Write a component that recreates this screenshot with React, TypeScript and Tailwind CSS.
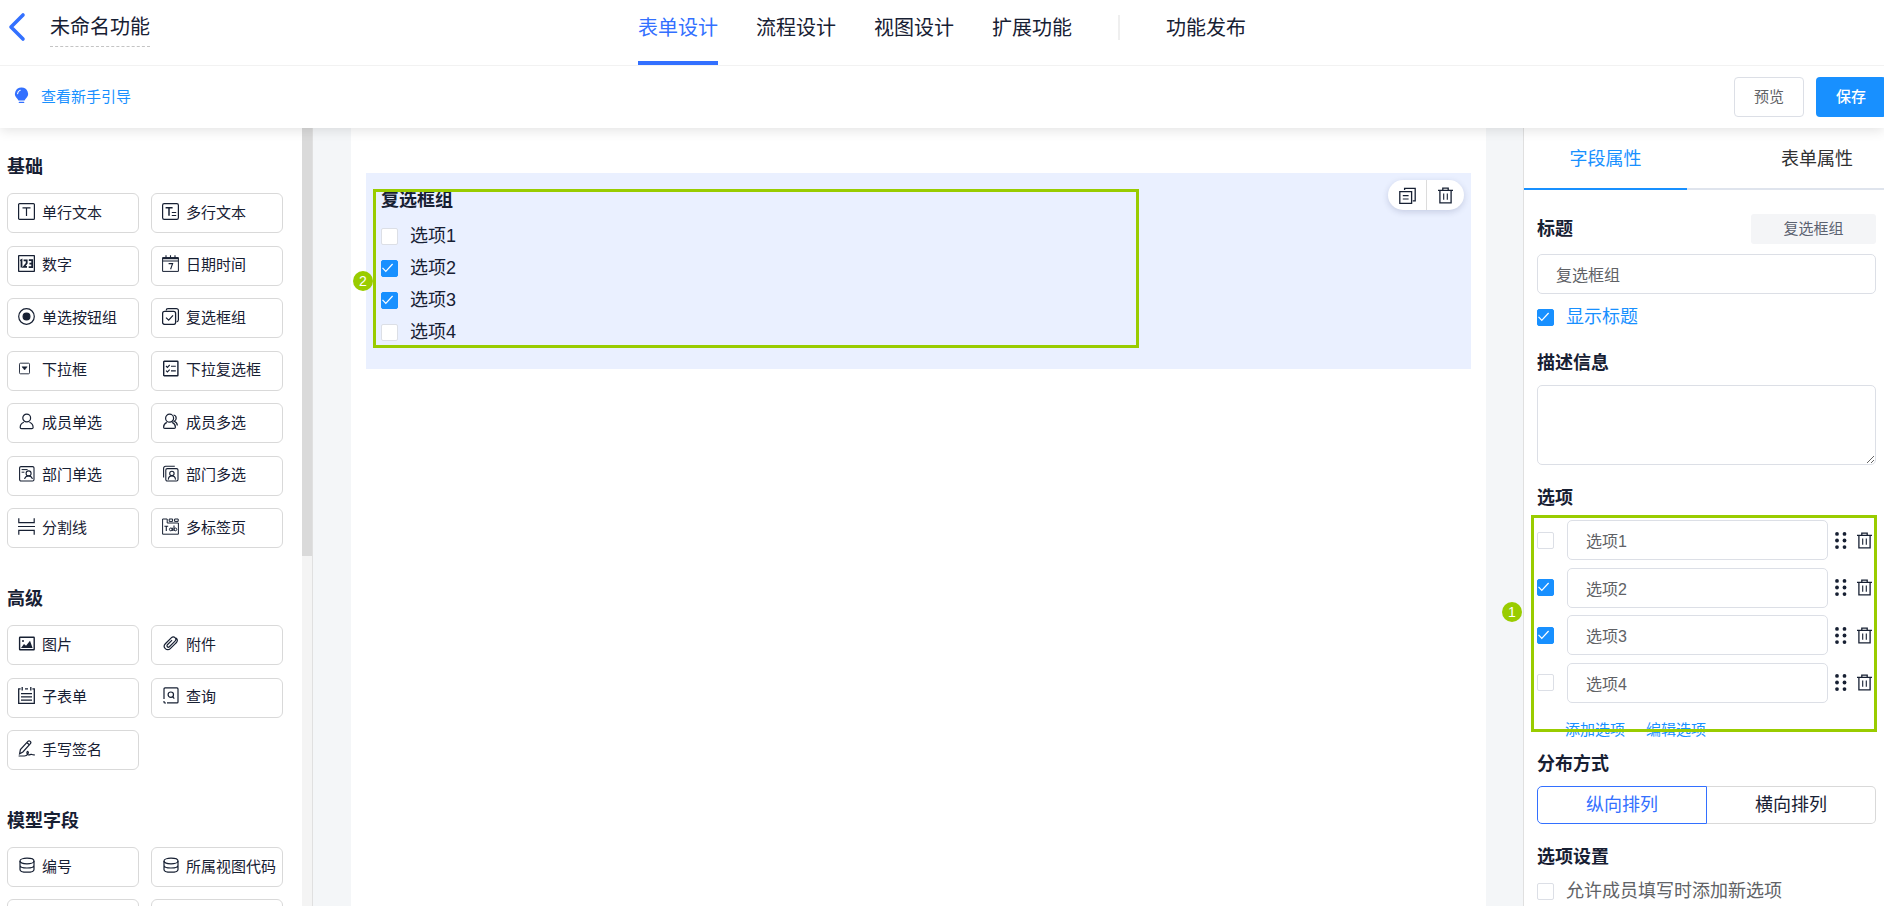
import { useState, type ReactNode } from 'react';

type FieldItem = { label: string; icon: ReactNode };
type Option = { label: string; checked: boolean };

function Glyph({ children }: { children: ReactNode }) {
  return (
    <svg
      viewBox="0 0 17 17"
      className="h-[17px] w-[17px] shrink-0"
      fill="none"
      stroke="currentColor"
      strokeWidth="1.2"
      aria-hidden="true"
    >
      {children}
    </svg>
  );
}

const icons = {
  text: (
    <Glyph>
      <rect x="0.6" y="0.6" width="15.8" height="15.8" rx="1" />
      <path d="M4.5 4.9h8M8.5 4.9v8" />
    </Glyph>
  ),
  multiText: (
    <Glyph>
      <rect x="0.6" y="0.6" width="15.8" height="15.8" rx="1.6" />
      <path d="M3.6 4.7h7M7 4.7v8" strokeWidth="1.5" />
      <path d="M9.8 9.5h4.4M9.8 12.5h4.4" />
    </Glyph>
  ),
  number: (
    <Glyph>
      <rect x="0.6" y="0.6" width="15.8" height="15.8" rx="0.6" strokeWidth="1.3" />
      <path d="M2.2 5.7l1.3-.7v7.4M5.6 5.4h3.1v2.9l-2.9 3.6h3.2M10.8 5.2h3.4v6.9h-3.5M11.4 8.6h2.8" strokeWidth="1.8" />
    </Glyph>
  ),
  date: (
    <Glyph>
      <path d="M0.6 2.6h15.8v13.8H0.6z" strokeWidth="1" />
      <path d="M0.5 3.4h16" strokeWidth="1.6" />
      <path d="M0.6 6h15.8" strokeWidth="1" />
      <path d="M4 .3v2.4M8.5 .3v2.4M13 .3v2.4M6.6 8.6h4l-2 5.6" strokeWidth="1.1" />
    </Glyph>
  ),
  radio: (
    <Glyph>
      <circle cx="8.5" cy="8.5" r="7.8" />
      <circle cx="8.5" cy="8.5" r="3.4" fill="currentColor" />
    </Glyph>
  ),
  checkbox: (
    <Glyph>
      <rect x="0.6" y="3.4" width="13" height="13" rx="2" strokeWidth="1.3" />
      <path d="M4.2 2.6V2.4A1.8 1.8 0 0 1 6 .6h8.4a2 2 0 0 1 2 2v9.2a2 2 0 0 1-1.8 2" />
      <path d="M4 9.6l2.7 2.6 4.3-4.8" />
    </Glyph>
  ),
  select: (
    <Glyph>
      <rect x="1.5" y="3.2" width="10" height="10.6" rx="1" strokeWidth="0.9" />
      <path d="M4 6.8h5.2L6.6 10z" fill="currentColor" strokeWidth="0.5" />
    </Glyph>
  ),
  multiSelect: (
    <Glyph>
      <rect x="1.7" y="1.2" width="14.2" height="14.6" rx="0.6" strokeWidth="1.4" />
      <path d="M4 6l1.4 1.4L7.7 5M4 10.6L5.4 12l2.3-2.4M9 6.3h4.8M9 10.9h4.8" strokeWidth="1.1" />
    </Glyph>
  ),
  user: (
    <Glyph>
      <circle cx="8.7" cy="5" r="3.9" />
      <path d="M5.8 9.2c-2.3.9-3.6 2.8-3.6 5.2 0 .8.5 1.2 1.3 1.2h10.3c.8 0 1.3-.4 1.3-1.2 0-2.4-1.3-4.3-3.6-5.2" />
    </Glyph>
  ),
  users: (
    <Glyph>
      <circle cx="7.6" cy="5.2" r="4" />
      <path d="M4.8 9.4c-2 .9-3.2 2.6-3.2 4.8 0 .8.4 1.2 1.2 1.2h9.4c.8 0 1.2-.4 1.2-1.2 0-2.2-1.2-3.9-3.2-4.8" />
      <path d="M11.6 2c1.6.3 2.6 1.5 2.6 3.2 0 1.5-.8 2.6-2 3.1 1.9.7 3 2.2 3.2 4.2" />
    </Glyph>
  ),
  dept: (
    <Glyph>
      <path d="M8 16H3a1.4 1.4 0 0 1-1.4-1.4V3A1.4 1.4 0 0 1 3 1.6h11.6A1.4 1.4 0 0 1 16 3v11.6A1.4 1.4 0 0 1 14.6 16H8z" strokeWidth="1.1" />
      <path d="M3.6 4.6h6M3.6 7.2h2.8" strokeWidth="1" />
      <circle cx="10.6" cy="8.4" r="2.5" strokeWidth="1.1" />
      <path d="M6.6 14c.4-1.9 1.6-3 3.9-3s3.5 1.1 3.9 3" strokeWidth="1.1" />
    </Glyph>
  ),
  depts: (
    <Glyph>
      <rect x="3.8" y="3.6" width="12.2" height="12.4" rx="1.5" strokeWidth="1.1" />
      <path d="M1.6 12.6V3.2a2 2 0 0 1 2-2h9.2" strokeWidth="1.1" />
      <circle cx="9.9" cy="8.4" r="2.2" strokeWidth="1.1" />
      <path d="M6.3 14.6c.2-2.3 1.5-3.7 3.6-3.7s3.4 1.4 3.6 3.7" strokeWidth="1.1" />
    </Glyph>
  ),
  divider: (
    <Glyph>
      <path d="M.8.3v4.3h15.4V.3M0 8.5h17M.8 16.7v-4.3h15.4v4.3" />
    </Glyph>
  ),
  tabs: (
    <Glyph>
      <path d="M.6 1v15.2h15.8V5H5.2V1zM7.2 3.4V1h3.4v2.4zM12.6 3.4V1h3.6v2.4z" strokeWidth="1" />
      <path d="M2.4 8.2h3.8M4.3 8.2v4.8M10.3 13V9.8M12 7.5v5.5" strokeWidth="1.1" />
      <circle cx="8.8" cy="11.4" r="1.4" strokeWidth="1" />
      <circle cx="13.4" cy="11.4" r="1.4" strokeWidth="1" />
    </Glyph>
  ),
  image: (
    <Glyph>
      <rect x="1.6" y="2.2" width="14.6" height="12.6" rx="0.5" strokeWidth="1.4" />
      <circle cx="5" cy="6" r="1" fill="currentColor" stroke="none" />
      <path d="M3 13l3-4 2 1.8 4-5L14.6 13z" fill="currentColor" stroke="none" />
    </Glyph>
  ),
  clip: (
    <Glyph>
      <g transform="rotate(45 8.5 8.5)">
        <path d="M12 5.5v6.8a3.5 3.5 0 0 1-7 0V3.6a2.5 2.5 0 0 1 5 0v8a1.4 1.4 0 0 1-2.8 0V5M12 5.5V3.6A3.5 3.5 0 0 0 8.5 .5" />
      </g>
    </Glyph>
  ),
  subform: (
    <Glyph>
      <path d="M2.6 1.8H.7v14.5h15.6V1.8h-1.9M7 1.8h3M4.2 0v3.4M12.8 0v3.4" strokeWidth="1.3" />
      <path d="M3 6.6h11M3 9.9h11M3 13.1h11" />
    </Glyph>
  ),
  query: (
    <Glyph>
      <path d="M2 12V1.9A1 1 0 0 1 3 .9h12a1 1 0 0 1 1 1v13a1 1 0 0 1-1 1H5" />
      <path d="M2 14v1a1 1 0 0 0 1 1h1" />
      <circle cx="8.8" cy="7.7" r="2.7" />
      <path d="M10.6 9.7l1.7 1.9" />
    </Glyph>
  ),
  sign: (
    <Glyph>
      <path d="M1.6 13.8l.8-4.2L9.9 1.4a1.7 1.7 0 0 1 2.5 2.3L4.9 12z" />
      <path d="M9 2.7l2.4 2.1M.6 16h5.8c3 0 4.8-3.2 3.6-4.4-1.2-.9-2 2.8.6 3.4 1 .2 1.8-.9 2.7-.7.9.3 1.7.9 3.5.5" />
    </Glyph>
  ),
  data: (
    <Glyph>
      <ellipse cx="9" cy="4" rx="7" ry="2.8" />
      <path d="M2 4v8.4C2 14 5.2 15.2 9 15.2s7-1.2 7-2.8V4M2 8.2C2 9.8 5.2 11 9 11s7-1.2 7-2.8" />
    </Glyph>
  ),
};

const groups: { title: string; height: string; items: FieldItem[] }[] = [
  {
    title: '基础',
    height: 'min-h-[355px]',
    items: [
      { label: '单行文本', icon: icons.text },
      { label: '多行文本', icon: icons.multiText },
      { label: '数字', icon: icons.number },
      { label: '日期时间', icon: icons.date },
      { label: '单选按钮组', icon: icons.radio },
      { label: '复选框组', icon: icons.checkbox },
      { label: '下拉框', icon: icons.select },
      { label: '下拉复选框', icon: icons.multiSelect },
      { label: '成员单选', icon: icons.user },
      { label: '成员多选', icon: icons.users },
      { label: '部门单选', icon: icons.dept },
      { label: '部门多选', icon: icons.depts },
      { label: '分割线', icon: icons.divider },
      { label: '多标签页', icon: icons.tabs },
    ],
  },
  {
    title: '高级',
    height: 'min-h-[145px]',
    items: [
      { label: '图片', icon: icons.image },
      { label: '附件', icon: icons.clip },
      { label: '子表单', icon: icons.subform },
      { label: '查询', icon: icons.query },
      { label: '手写签名', icon: icons.sign },
    ],
  },
  {
    title: '模型字段',
    height: 'min-h-[92px]',
    items: [
      { label: '编号', icon: icons.data },
      { label: '所属视图代码', icon: icons.data },
      { label: '', icon: null },
      { label: '', icon: null },
    ],
  },
];

function CheckBox({ checked, onChange, label }: { checked: boolean; onChange: () => void; label?: string }) {
  return (
    <span className="grid h-[17px] w-[17px] shrink-0">
      <input
        type="checkbox"
        aria-label={label}
        checked={checked}
        onChange={onChange}
        className="col-start-1 row-start-1 h-[17px] w-[17px] appearance-none rounded-[2px] border border-[#dcdfe6] bg-white checked:border-[#1890ff] checked:bg-[#1890ff]"
      />
      {checked && (
        <svg
          viewBox="0 0 17 17"
          className="pointer-events-none col-start-1 row-start-1 h-[17px] w-[17px]"
          fill="none"
          stroke="#fff"
          strokeWidth="1.2"
          aria-hidden="true"
        >
          <path d="M1.5 7.8l3.3 3.6L11.6 4" />
        </svg>
      )}
    </span>
  );
}

function TrashIcon() {
  return (
    <Glyph>
      <path d="M1 3.3h15M5.8 3.3V1.1h5.4v2.2M2.9 3.3v12.6h11.2V3.3" strokeWidth="1.3" />
      <path d="M6.7 6.4v6.4M10.3 6.4v6.4" strokeWidth="1.1" />
    </Glyph>
  );
}

function Heading({ children }: { children: ReactNode }) {
  return <h3 className="mb-[10px] pt-px text-lg/6 font-bold">{children}</h3>;
}

function Badge({ children }: { children: ReactNode }) {
  return (
    <span className="flex h-5 w-5 items-center justify-center rounded-full bg-[#99cc00] text-sm/5 text-white">
      {children}
    </span>
  );
}

function Header() {
  const tabs = ['流程设计', '视图设计', '扩展功能'];
  return (
    <header className="z-20 flex h-[66px] shrink-0 items-start border-b border-[#f2f2f2] bg-white">
      <div className="flex flex-1 items-start">
        <button type="button" aria-label="返回" className="mt-3 ml-2 text-[#3370ff]">
          <svg viewBox="0 0 18 30" className="h-[30px] w-[18px]" fill="none" stroke="currentColor" strokeWidth="3.6" strokeLinecap="round" strokeLinejoin="round">
            <path d="M15 3L3 15l12 12" />
          </svg>
        </button>
        <h1 className="ml-6 border-b border-dashed border-[#c4c4c4] pt-[11px] pb-[3px] text-xl/8">未命名功能</h1>
      </div>
      <nav className="flex h-[65px] items-start text-xl/8">
        <a href="#form" className="flex h-full items-start border-b-4 border-[#3370ff] pt-3 text-[#3370ff]">
          表单设计
        </a>
        {tabs.map((tab) => (
          <a key={tab} href="#tab" className="ml-[38px] pt-3">
            {tab}
          </a>
        ))}
        <span className="mx-[46px] mt-[15px] h-[25px] w-[2px] bg-[#efefef]" />
        <a href="#publish" className="pt-3">
          功能发布
        </a>
      </nav>
      <div className="flex-1" />
    </header>
  );
}

function Toolbar() {
  return (
    <div className="z-10 flex h-[62px] shrink-0 items-center bg-white pl-[13px] shadow-[0_2px_12px_rgba(0,0,0,0.12)]">
      <svg viewBox="0 0 17 19" className="mb-[3px] h-[19px] w-[17px] text-[#3370ff]" aria-hidden="true">
        <path d="M8.5 1.4a6.4 6.4 0 0 0-4.2 11.3c.6.6 1 1.2 1.1 1.9h6.2c.1-.7.5-1.3 1.1-1.9A6.4 6.4 0 0 0 8.5 1.4z" fill="currentColor" />
        <path d="M6.4 16.4h4.2" stroke="currentColor" strokeWidth="1.4" strokeLinecap="round" />
        <path d="M4.6 7.6a4 4 0 0 1 2.6-3.4" stroke="#fff" strokeWidth="1.1" fill="none" strokeLinecap="round" />
      </svg>
      <a href="#guide" className="ml-[11px] text-[15px]/6 text-[#1890ff]">
        查看新手引导
      </a>
      <div className="-mr-[2px] ml-auto flex gap-3 text-[15px]/6">
        <button type="button" className="h-10 w-[70px] rounded-[4px] border border-[#dcdfe6] text-[#606266]">
          预览
        </button>
        <button type="button" className="h-10 w-[70px] rounded-[4px] bg-[#1890ff] font-medium text-white">
          保存
        </button>
      </div>
    </div>
  );
}

function Sidebar() {
  return (
    <aside className="flex w-[313px] shrink-0 border-r border-[#e0e0e0] bg-white">
      <div className="flex flex-1 flex-col gap-[39px] overflow-hidden pt-[27px] pl-[7px]">
        {groups.map((group) => (
          <section key={group.title}>
            <h2 className="mb-[14px] text-lg/6 font-bold">{group.title}</h2>
            <div className={`grid grid-cols-[132px_132px] content-between gap-x-3 ${group.height}`}>
              {group.items.map((item, i) => (
                <button
                  key={i}
                  type="button"
                  className="flex h-10 items-center gap-[7px] rounded-md border border-[#d9d9d9] pb-1 pl-[10px] text-[15px]/6 whitespace-nowrap"
                >
                  {item.icon}
                  <span className="pt-[3px]">{item.label}</span>
                </button>
              ))}
            </div>
          </section>
        ))}
      </div>
      <div className="w-[10px] bg-[#f4f4f4]">
        <div className="h-[55%] bg-[#dadada]" />
      </div>
    </aside>
  );
}

function Canvas({ options, toggle }: { options: Option[]; toggle: (i: number) => void }) {
  return (
    <main className="flex flex-1 bg-[#f4f6f8] pr-[37px] pl-[38px]">
      <div className="flex-1 bg-white px-[15px] pt-[45px]">
        <div className="relative bg-[#eaf0ff] px-[15px] pt-[15px] pb-[21px]">
          <h3 className="mb-2 text-lg/6 font-bold">复选框组</h3>
          {options.map((o, i) => (
            <label key={i} className="flex h-8 w-max items-center gap-3 text-lg/6">
              <CheckBox checked={o.checked} onChange={() => toggle(i)} />
              {o.label}
            </label>
          ))}
          <div className="absolute top-[7px] right-[7px] flex h-[30px] rounded-full bg-white shadow-[0_2px_6px_rgba(40,50,100,0.18)]">
            <button type="button" aria-label="复制" className="flex w-[39px] items-center justify-center border-r border-[#dcdcdc]">
              <Glyph>
                <path d="M.8 4.7h11.8v11.6H.8zM5.6 3V1.3h10.6v12.5h-2.4" strokeWidth="1.3" />
                <path d="M3.8 8.6h5.8M3.8 12h5.8" />
              </Glyph>
            </button>
            <button type="button" aria-label="删除" className="flex w-[37px] items-center justify-center">
              <TrashIcon />
            </button>
          </div>
          <div className="pointer-events-none absolute top-4 left-[7px] h-[159px] w-[766px] border-[3px] border-[#99cc00]" />
          <div className="absolute top-[98px] left-[-13px]">
            <Badge>2</Badge>
          </div>
        </div>
      </div>
    </main>
  );
}

function PropertyPanel({
  options,
  toggle,
  rename,
}: {
  options: Option[];
  toggle: (i: number) => void;
  rename: (i: number, v: string) => void;
}) {
  const [showTitle, setShowTitle] = useState(true);
  const [allowNew, setAllowNew] = useState(false);
  const [title, setTitle] = useState('复选框组');
  const input = 'h-10 rounded-[5px] border border-[#dcdfe6] bg-white px-[18px] text-base/6 text-[#606266] outline-none';
  return (
    <aside className="relative w-[361px] shrink-0 border-l border-[#e0e0e0] bg-white">
      <div className="flex h-[62px] overflow-hidden text-lg/6 text-[#303133]">
        <button type="button" className="w-[163px] shrink-0 border-b-2 border-[#1890ff] pt-[2px] text-[#1890ff]">
          字段属性
        </button>
        <button type="button" className="flex-1 border-b-2 border-[#dfe4ed] pt-[2px] pr-[31px] text-right">
          表单属性
        </button>
      </div>
      <div className="flex flex-col pt-6 pr-2 pl-[13px]">
        <div className="mb-[10px] flex h-[30px] items-center justify-between">
          <label htmlFor="title" className="text-lg/6 font-bold">
            标题
          </label>
          <span className="w-[125px] rounded-[3px] bg-[#f4f5f7] text-center text-[15px]/[30px] text-[#5b6270]">复选框组</span>
        </div>
        <input id="title" className={input} value={title} onChange={(e) => setTitle(e.target.value)} />
        <label className="mt-[11px] mb-[21px] flex w-max items-center gap-3 text-lg/6 text-[#1890ff]">
          <CheckBox checked={showTitle} onChange={() => setShowTitle(!showTitle)} />
          显示标题
        </label>
        <Heading>描述信息</Heading>
        <textarea
          aria-label="描述信息"
          className="mb-5 h-20 w-full resize-y rounded-[5px] border border-[#dcdfe6] px-[18px] py-2 text-base/6 outline-none"
        />
        <Heading>选项</Heading>
        <div className="relative mb-[15px] flex min-h-[183px] flex-col justify-between">
          {options.map((o, i) => (
            <div key={i} className="flex items-center">
              <CheckBox checked={o.checked} onChange={() => toggle(i)} label={`默认选中${i + 1}`} />
              <input
                aria-label={`选项名称${i + 1}`}
                className={`ml-[13px] min-w-0 flex-1 ${input}`}
                value={o.label}
                onChange={(e) => rename(i, e.target.value)}
              />
              <button type="button" aria-label="拖动排序" className="ml-[5px]">
                <svg viewBox="0 0 17 17" className="h-[17px] w-[17px]" fill="currentColor" aria-hidden="true">
                  {[1.9, 8.5, 15.1].map((y) => (
                    <g key={y}>
                      <circle cx="4" cy={y} r="1.9" />
                      <circle cx="11.5" cy={y} r="1.9" />
                    </g>
                  ))}
                </svg>
              </button>
              <button type="button" aria-label="删除选项" className="mr-[3px] ml-[6px]">
                <TrashIcon />
              </button>
            </div>
          ))}
          <div className="pointer-events-none absolute -top-[5px] -right-px h-[217px] w-[346px] border-[3px] border-[#99cc00]" />
          <div className="absolute top-[82px] left-[-35px]">
            <Badge>1</Badge>
          </div>
        </div>
        <div className="mb-[9px] flex gap-[21px] pl-7 text-[15px]/6 text-[#1890ff]">
          <button type="button">添加选项</button>
          <button type="button">编辑选项</button>
        </div>
        <Heading>分布方式</Heading>
        <div className="mb-5 flex h-[38px] text-lg/6">
          <button type="button" className="flex-1 rounded-l-[5px] border border-[#3370ff] text-[#3370ff]">
            纵向排列
          </button>
          <button type="button" className="flex-1 rounded-r-[5px] border border-l-0 border-[#d9d9d9]">
            横向排列
          </button>
        </div>
        <Heading>选项设置</Heading>
        <label className="flex w-max items-center gap-3 text-lg/6 text-[#606266]">
          <CheckBox checked={allowNew} onChange={() => setAllowNew(!allowNew)} />
          允许成员填写时添加新选项
        </label>
      </div>
    </aside>
  );
}

export default function App() {
  const [options, setOptions] = useState<Option[]>([
    { label: '选项1', checked: false },
    { label: '选项2', checked: true },
    { label: '选项3', checked: true },
    { label: '选项4', checked: false },
  ]);
  const toggle = (i: number) => setOptions(options.map((o, n) => (n === i ? { ...o, checked: !o.checked } : o)));
  const rename = (i: number, label: string) => setOptions(options.map((o, n) => (n === i ? { ...o, label } : o)));

  return (
    <div className="flex h-screen flex-col overflow-hidden bg-white font-['Liberation_Sans','Noto_Sans_CJK_SC',sans-serif] text-[#172033]">
      <Header />
      <Toolbar />
      <div className="flex min-h-0 flex-1 overflow-hidden">
        <Sidebar />
        <Canvas options={options} toggle={toggle} />
        <PropertyPanel options={options} toggle={toggle} rename={rename} />
      </div>
    </div>
  );
}
